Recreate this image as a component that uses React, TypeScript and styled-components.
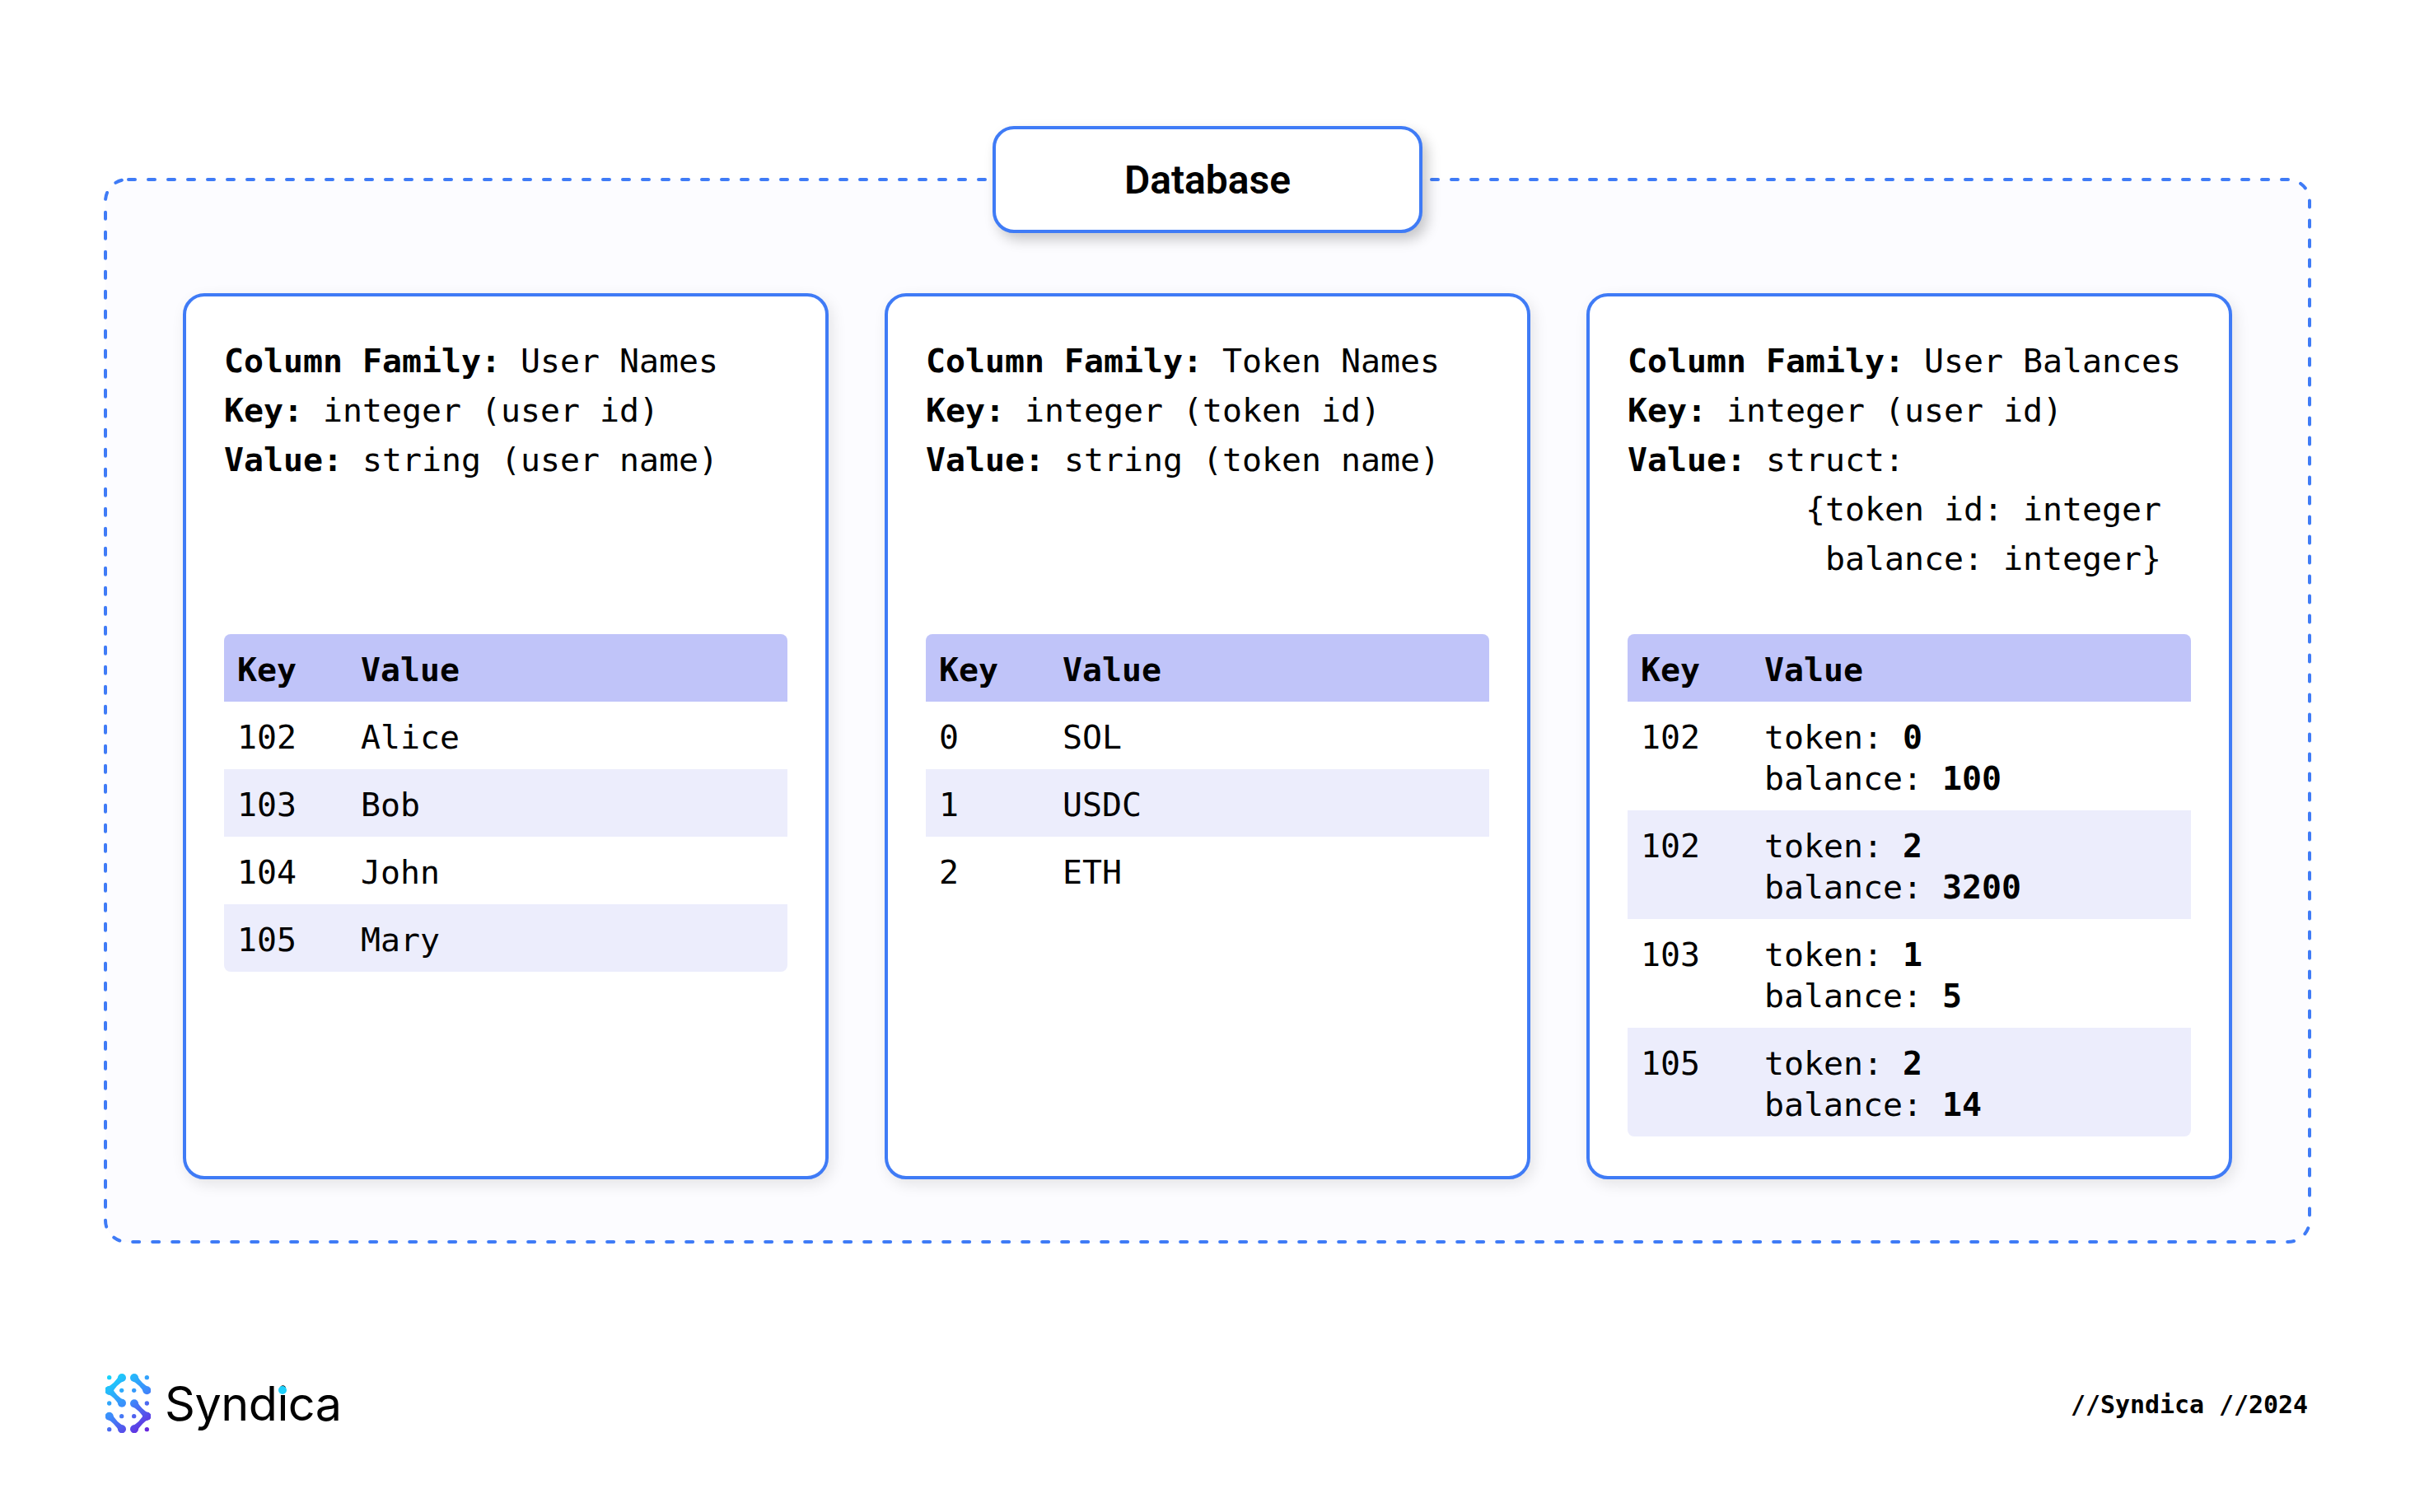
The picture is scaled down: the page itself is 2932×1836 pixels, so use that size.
import React from "react";
import styled, { createGlobalStyle } from "styled-components";

const MONO = '"DejaVu Sans Mono", "Liberation Mono", monospace';

const Global = createGlobalStyle`
  html, body { margin: 0; padding: 0; background: #fff; }
`;

const Page = styled.div`
  width: 2932px;
  height: 1836px;
  box-sizing: border-box;
  padding: 218px 128px 0;
  display: flex;
  flex-direction: column;
  font-family: ${MONO};
  color: #000;
`;

const Panel = styled.section`
  position: relative;
  height: 1290px;
  box-sizing: border-box;
  padding: 138px 94px 79px 94px;
  background: #fcfcff;
  border-radius: 26px;
  display: grid;
  grid-template-columns: repeat(3, 784px);
  column-gap: 68px;
`;

const DashFrame = styled.svg`
  position: absolute;
  left: 0;
  top: 0;
  overflow: visible;
  pointer-events: none;
`;

const DashLine = styled.path`
  fill: none;
  stroke: #3f7bf6;
  stroke-width: 4;
  stroke-linecap: round;
  stroke-dasharray: 8 16;
`;

const Title = styled.div`
  position: absolute;
  top: -65px;
  left: 1077px;
  width: 522px;
  height: 130px;
  box-sizing: border-box;
  display: flex;
  align-items: center;
  justify-content: center;
  background: #fff;
  border: 4px solid #3f7bf6;
  border-radius: 26px;
  box-shadow: 6px 8px 16px rgba(0, 0, 0, 0.22);
  font-family: Roboto, sans-serif;
  font-weight: 600;
  font-size: 48px;
`;

const Card = styled.article`
  box-sizing: border-box;
  display: flex;
  flex-direction: column;
  padding: 48px 46px;
  background: #fff;
  border: 4px solid #3f7bf6;
  border-radius: 26px;
  box-shadow: 4px 6px 18px rgba(0, 0, 0, 0.1);
`;

const Info = styled.div`
  height: 362px;
  flex: none;
`;

const InfoLine = styled.div`
  font-size: 39.86px;
  line-height: 60px;
  white-space: pre;
`;

const Strong = styled.b`
  font-weight: 700;
`;

const Row = styled.div<{ $kind: "head" | "plain" | "alt"; $last?: boolean }>`
  display: grid;
  grid-template-columns: 150px 1fr;
  padding: 18px 16px 14px;
  font-size: 39.86px;
  line-height: 50px;
  white-space: pre;
  font-weight: ${(p) => (p.$kind === "head" ? 700 : 400)};
  background: ${(p) =>
    p.$kind === "head" ? "#c0c4f9" : p.$kind === "alt" ? "#ecedfc" : "transparent"};
  border-radius: ${(p) =>
    p.$kind === "head" ? "8px 8px 0 0" : p.$last ? "0 0 8px 8px" : "0"};
`;

const Footer = styled.footer`
  margin-top: 159px;
  height: 74px;
  display: flex;
  align-items: center;
  justify-content: space-between;
`;

const Brand = styled.div`
  display: flex;
  align-items: center;
  gap: 17px;
`;

const Wordmark = styled.span`
  font-family: Inter, sans-serif;
  font-weight: 400;
  font-size: 57.5px;
  line-height: 74px;
  letter-spacing: -0.5px;
`;

const DottedLetter = styled.span`
  position: relative;
  &::after {
    content: "";
    position: absolute;
    left: 50%;
    top: 14px;
    width: 10px;
    height: 10px;
    margin-left: -5px;
    border-radius: 50%;
    background: #1fd0fb;
  }
`;

const Tag = styled.span`
  font-size: 29.9px;
  font-weight: 700;
  margin: 2px 2px 0 0;
`;

type Circle = [number, number, number];

const blob = (a: Circle, b: Circle, waist = 3) => {
  const dx = b[0] - a[0];
  const dy = b[1] - a[1];
  const len = Math.hypot(dx, dy);
  const nx = -dy / len;
  const ny = dx / len;
  const mx = (a[0] + b[0]) / 2;
  const my = (a[1] + b[1]) / 2;
  const ra = a[2] * 0.9;
  const rb = b[2] * 0.9;
  return [
    `M${a[0] + nx * ra} ${a[1] + ny * ra}`,
    `Q${mx + nx * waist} ${my + ny * waist} ${b[0] + nx * rb} ${b[1] + ny * rb}`,
    `L${b[0] - nx * rb} ${b[1] - ny * rb}`,
    `Q${mx - nx * waist} ${my - ny * waist} ${a[0] - nx * ra} ${a[1] - ny * ra}Z`,
  ].join("");
};

const links: [Circle, Circle][] = [
  [[113, 98, 15], [67, 144, 16]],
  [[67, 144, 16], [113, 190, 15]],
  [[158, 98, 15], [204, 144, 15]],
  [[158, 192, 15], [204, 238, 15]],
  [[204, 238, 15], [158, 285, 15]],
  [[67, 238, 15], [113, 285, 15]],
];

const dots: [number, number][] = [
  [67, 97], [204, 97], [112, 144], [157, 144], [67, 191],
  [204, 191], [112, 238], [157, 238], [67, 286], [204, 286],
];

const Logo = () => (
  <svg width="55" height="72" viewBox="53 83 165 216" aria-hidden="true">
    <defs>
      <linearGradient id="syndica" gradientUnits="userSpaceOnUse" x1="60" y1="90" x2="210" y2="295">
        <stop offset="0" stopColor="#16d8fb" />
        <stop offset="0.5" stopColor="#3d8bfb" />
        <stop offset="1" stopColor="#6a1fdc" />
      </linearGradient>
    </defs>
    <g fill="url(#syndica)">
      {links.map(([a, b], i) => (
        <g key={i}>
          <path d={blob(a, b)} />
          <circle cx={a[0]} cy={a[1]} r={a[2]} />
          <circle cx={b[0]} cy={b[1]} r={b[2]} />
        </g>
      ))}
      {dots.map(([x, y]) => (
        <circle key={`${x}-${y}`} cx={x} cy={y} r={8} />
      ))}
    </g>
  </svg>
);

type Line = [string, string];
type CellRow = { k: string; v: React.ReactNode };

const Bal = ({ t, b }: { t: string; b: string }) => (
  <div>
    token: <Strong>{t}</Strong>
    {"\n"}balance: <Strong>{b}</Strong>
  </div>
);

const tables: { info: (Line | string)[]; rows: CellRow[] }[] = [
  {
    info: [
      ["Column Family:", " User Names"],
      ["Key:", " integer (user id)"],
      ["Value:", " string (user name)"],
    ],
    rows: [
      { k: "102", v: "Alice" },
      { k: "103", v: "Bob" },
      { k: "104", v: "John" },
      { k: "105", v: "Mary" },
    ],
  },
  {
    info: [
      ["Column Family:", " Token Names"],
      ["Key:", " integer (token id)"],
      ["Value:", " string (token name)"],
    ],
    rows: [
      { k: "0", v: "SOL" },
      { k: "1", v: "USDC" },
      { k: "2", v: "ETH" },
    ],
  },
  {
    info: [
      ["Column Family:", " User Balances"],
      ["Key:", " integer (user id)"],
      ["Value:", " struct:"],
      "         {token id: integer",
      "          balance: integer}",
    ],
    rows: [
      { k: "102", v: <Bal t="0" b="100" /> },
      { k: "102", v: <Bal t="2" b="3200" /> },
      { k: "103", v: <Bal t="1" b="5" /> },
      { k: "105", v: <Bal t="2" b="14" /> },
    ],
  },
];

export default function App() {
  return (
    <>
      <Global />
      <Page>
        <Panel>
          <DashFrame width="2676" height="1290" aria-hidden="true">
            <DashLine d="M28 0H1068" />
            <DashLine d="M1610 0H2650A26 26 0 0 1 2676 26V1264A26 26 0 0 1 2650 1290H26A26 26 0 0 1 0 1264V26A26 26 0 0 1 26 0" />
          </DashFrame>
          <Title>Database</Title>
          {tables.map((t, i) => (
            <Card key={i}>
              <Info>
                {t.info.map((l, j) =>
                  typeof l === "string" ? (
                    <InfoLine key={j}>{l}</InfoLine>
                  ) : (
                    <InfoLine key={j}>
                      <Strong>{l[0]}</Strong>
                      {l[1]}
                    </InfoLine>
                  )
                )}
              </Info>
              <Row $kind="head">
                <span>Key</span>
                <span>Value</span>
              </Row>
              {t.rows.map((r, j) => (
                <Row key={j} $kind={j % 2 ? "alt" : "plain"} $last={j === t.rows.length - 1}>
                  <span>{r.k}</span>
                  <span>{r.v}</span>
                </Row>
              ))}
            </Card>
          ))}
        </Panel>
        <Footer>
          <Brand>
            <Logo />
            <Wordmark>
              Synd<DottedLetter>i</DottedLetter>ca
            </Wordmark>
          </Brand>
          <Tag>//Syndica //2024</Tag>
        </Footer>
      </Page>
    </>
  );
}
